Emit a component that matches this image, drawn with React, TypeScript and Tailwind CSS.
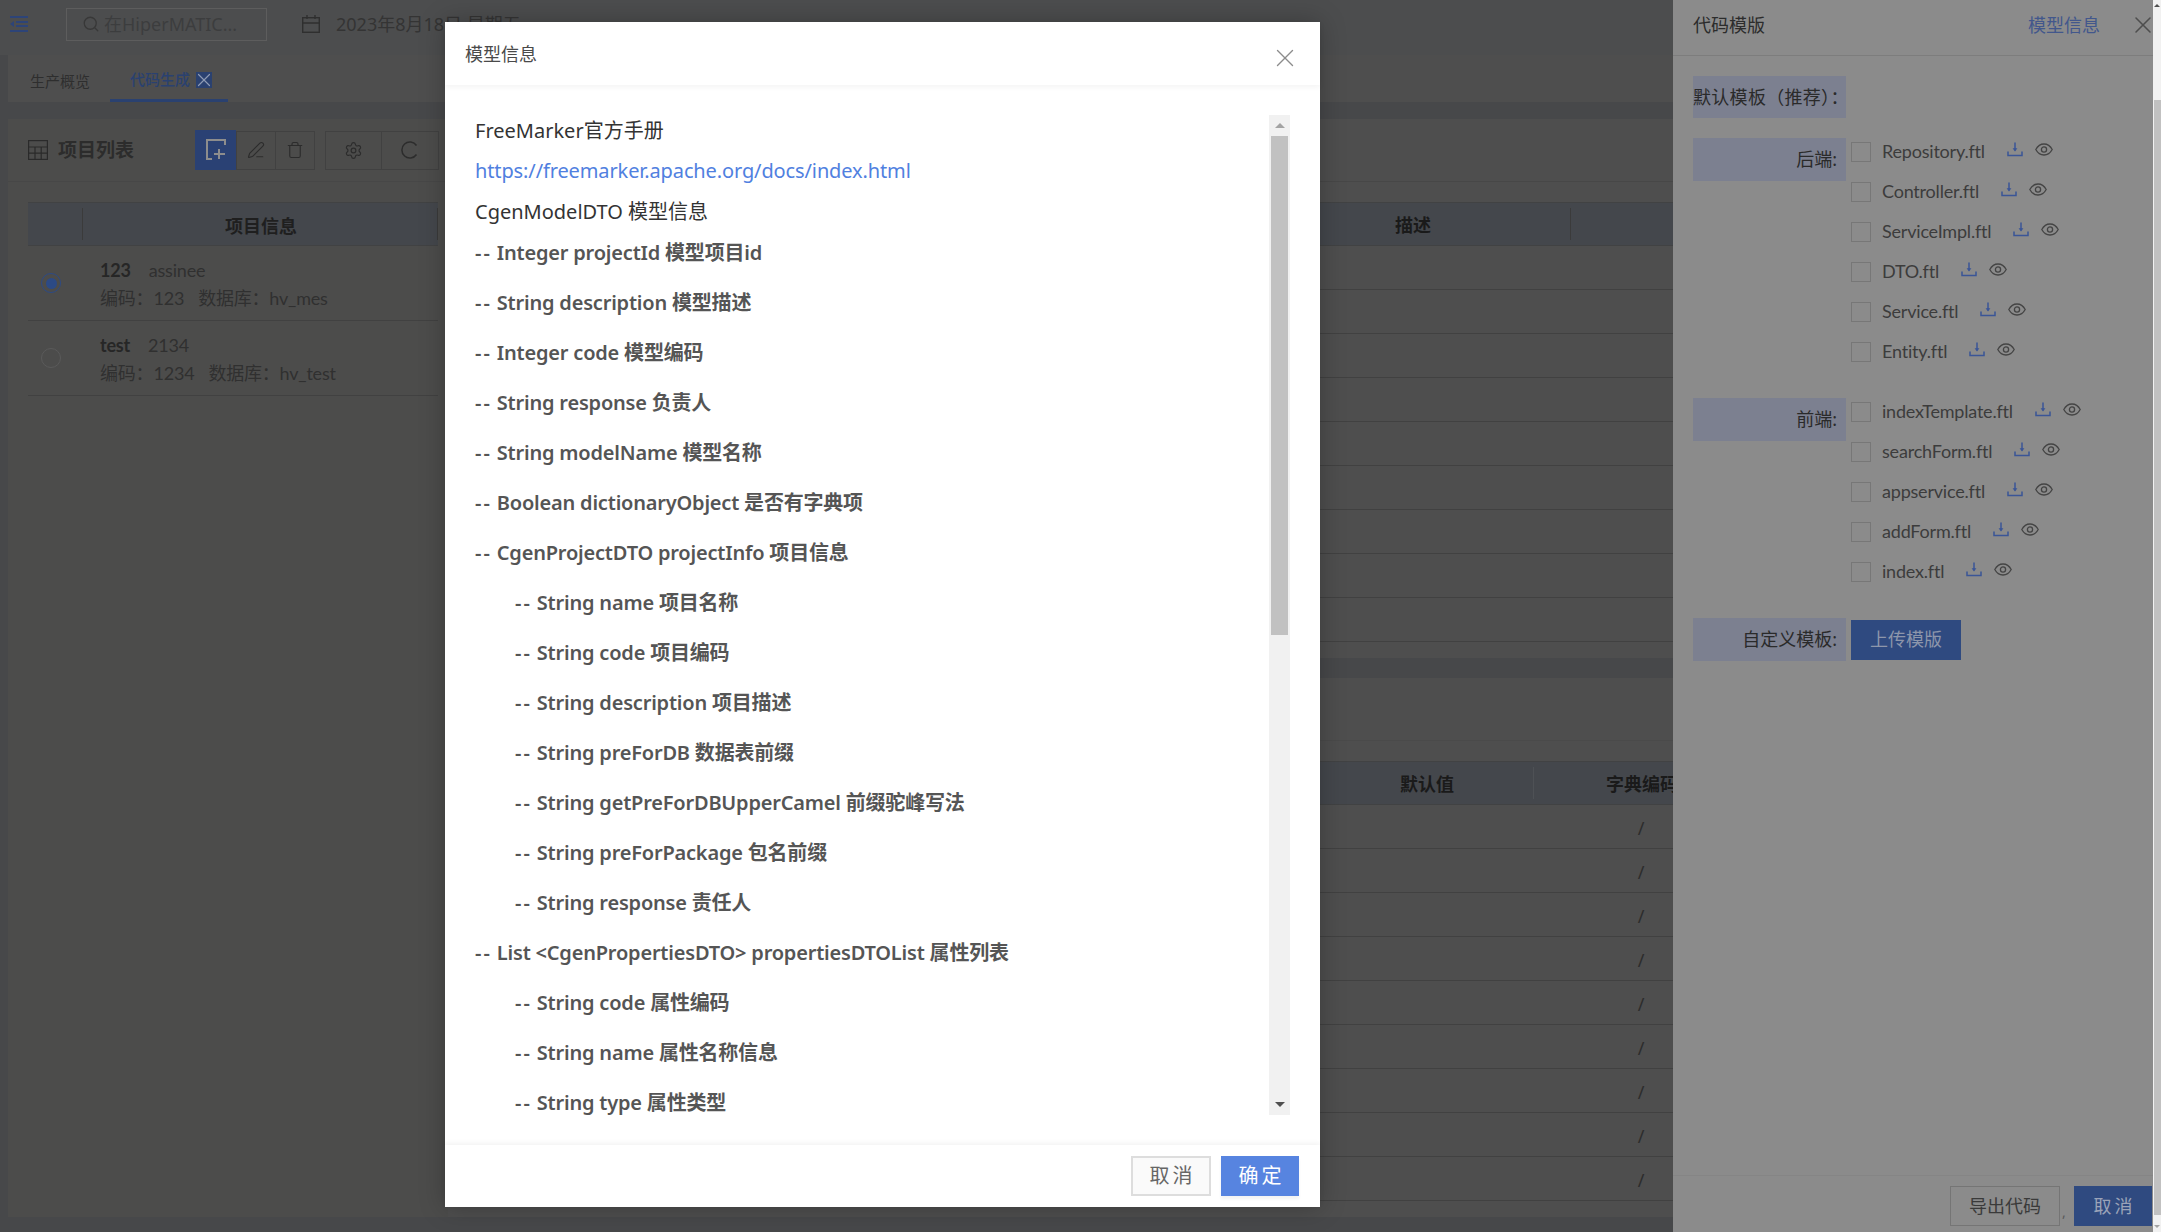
import { Search, PenLine, Trash, Settings, X } from "lucide-react";

const backendFiles = ["Repository.ftl", "Controller.ftl", "ServiceImpl.ftl", "DTO.ftl", "Service.ftl", "Entity.ftl"];
const frontendFiles = ["indexTemplate.ftl", "searchForm.ftl", "appservice.ftl", "addForm.ftl", "index.ftl"];

const modelLines = [
  { text: "Integer projectId 模型项目id", nested: false },
  { text: "String description 模型描述", nested: false },
  { text: "Integer code 模型编码", nested: false },
  { text: "String response 负责人", nested: false },
  { text: "String modelName 模型名称", nested: false },
  { text: "Boolean dictionaryObject 是否有字典项", nested: false },
  { text: "CgenProjectDTO projectInfo 项目信息", nested: false },
  { text: "String name 项目名称", nested: true },
  { text: "String code 项目编码", nested: true },
  { text: "String description 项目描述", nested: true },
  { text: "String preForDB 数据表前缀", nested: true },
  { text: "String getPreForDBUpperCamel 前缀驼峰写法", nested: true },
  { text: "String preForPackage 包名前缀", nested: true },
  { text: "String response 责任人", nested: true },
  { text: "List <CgenPropertiesDTO> propertiesDTOList 属性列表", nested: false },
  { text: "String code 属性编码", nested: true },
  { text: "String name 属性名称信息", nested: true },
  { text: "String type 属性类型", nested: true },
];

function DownloadIcon() {
  return (
    <svg width="16" height="15" viewBox="0 0 16 15" fill="none" stroke="#3a5597" strokeWidth="1.5">
      <path d="M8 0.5V8.5" />
      <path d="M5.6 6.2H10.4L8 9.6Z" fill="#3a5597" stroke="none" />
      <path d="M1 9.5V13.6H15V9.5" />
    </svg>
  );
}

function EyeIcon() {
  return (
    <svg width="18" height="13" viewBox="0 0 18 13" fill="none" stroke="#444444" strokeWidth="1.3">
      <path d="M0.8 6.5C2.8 2.8 5.6 1 9 1C12.4 1 15.2 2.8 17.2 6.5C15.2 10.2 12.4 12 9 12C5.6 12 2.8 10.2 0.8 6.5Z" />
      <circle cx="9" cy="6.5" r="2.6" />
    </svg>
  );
}

function FileRow({ name }: { name: string }) {
  return (
    <div className="flex h-[40px] items-center">
      <span className="h-[20px] w-[20px] border border-[#777777]" />
      <span className="mb-[2px] ml-[11px] font-['Lato','Noto_Sans_CJK_SC',sans-serif] text-[18px] tracking-[-0.2px] text-[#3c3c3c]">{name}</span>
      <span className="mb-[6px] ml-[22px] flex items-center gap-[12px]">
        <DownloadIcon />
        <EyeIcon />
      </span>
    </div>
  );
}

function Drawer() {
  return (
    <div className="absolute top-0 left-[1673px] flex h-[1232px] w-[480px] flex-col bg-[#8b8b8b]">
      <div className="flex h-[56px] shrink-0 items-center border-b border-[#7d7d7d] pb-[5px] pl-[20px] whitespace-nowrap">
        <span className="text-[18px] text-[#2c2c2c]">代码模版</span>
        <span className="ml-[263px] text-[18px] text-[#42578c]">模型信息</span>
        <X className="ml-[29px] h-[28px] w-[28px] shrink-0 text-[#4e4e4e]" strokeWidth={1.3} />
      </div>
      <div className="flex-1 pt-[20px] pl-[20px]">
        <div className="flex h-[42px] w-[153px] items-center bg-[#7c8090] text-[18px] tracking-[0.3px] whitespace-nowrap text-[#2a2a2a]">
          默认模板（推荐）：
        </div>
        <div className="mt-[14px] flex">
          <div className="mt-[6px] flex h-[43px] w-[153px] items-center justify-end bg-[#7c8090] pr-[9px] text-[18px] text-[#2a2a2a]">
            后端:
          </div>
          <div className="ml-[5px]">
            {backendFiles.map((f) => (
              <FileRow key={f} name={f} />
            ))}
          </div>
        </div>
        <div className="mt-[20px] flex">
          <div className="mt-[6px] flex h-[43px] w-[153px] items-center justify-end bg-[#7c8090] pr-[9px] text-[18px] text-[#2a2a2a]">
            前端:
          </div>
          <div className="ml-[5px]">
            {frontendFiles.map((f) => (
              <FileRow key={f} name={f} />
            ))}
          </div>
        </div>
        <div className="mt-[26px] flex items-center">
          <div className="flex h-[43px] w-[153px] items-center justify-end bg-[#7c8090] pr-[9px] text-[18px] text-[#2a2a2a]">
            自定义模板:
          </div>
          <button className="ml-[5px] h-[40px] w-[110px] bg-[#2f4a80] text-[18px] text-[#8d96ab]">上传模版</button>
        </div>
      </div>
      <div className="flex h-[57px] shrink-0 items-start justify-end border-t border-[#858585] pt-[10px]">
        <button className="h-[40px] w-[110px] border border-[#757575] text-[18px] text-[#3a3a3a]">导出代码</button>
        <span className="mx-[2px] mt-[15px] w-[10px] text-[14px] text-[#5a5a5a]">,</span>
        <button className="mr-[1px] h-[40px] w-[78px] bg-[#2f4a80] pl-[3px] text-[18px] tracking-[3px] text-[#9aa3b8]">取消</button>
      </div>
    </div>
  );
}

function ModelDialog() {
  return (
    <div className="absolute top-[22px] left-[445px] flex h-[1185px] w-[875px] flex-col bg-white shadow-[0_0_24px_rgba(0,0,0,0.25)]">
      <div className="flex h-[63px] shrink-0 items-center justify-between pr-[20px] pl-[20px] shadow-[0_2px_6px_rgba(0,0,0,0.05)]">
        <span className="pt-[2px] text-[18px] text-[#4a4a4a]">模型信息</span>
        <X className="mt-[8px] h-[30px] w-[30px] text-[#8c8c8c]" strokeWidth={1.1} />
      </div>
      <div className="relative flex-1 overflow-hidden pt-[26px] pl-[30px]">
        <p className="h-[39px] text-[20px] leading-[40px] text-[#333333]">FreeMarker官方手册</p>
        <p className="h-[41px] text-[20px] leading-[41px] tracking-[-0.12px] text-[#5080e0]">
          https://freemarker.apache.org/docs/index.html
        </p>
        <p className="h-[37px] text-[20px] leading-[41px] text-[#333333]">CgenModelDTO 模型信息</p>
        {modelLines.map((line, i) => (
          <p
            key={i}
            className={
              line.nested
                ? "h-[50px] pl-[40px] text-[20px] leading-[50px] font-semibold tracking-[-0.2px] text-[#555555]"
                : "h-[50px] text-[20px] leading-[50px] font-semibold tracking-[-0.2px] text-[#555555]"
            }
          >
            <span className="tracking-[2px]">--</span> {line.text}
          </p>
        ))}
        {/* scrollbar */}
        <div className="absolute top-[30px] right-[30px] flex h-[1000px] w-[21px] flex-col items-center bg-[#f1f1f1]">
          <span className="mt-[8px] h-0 w-0 border-x-[5px] border-b-[5px] border-x-transparent border-b-[#a3a3a3]" />
          <span className="mt-[8px] h-[499px] w-[17px] bg-[#c1c1c1]" />
          <span className="mt-auto mb-[8px] h-0 w-0 border-x-[5px] border-t-[5px] border-x-transparent border-t-[#505050]" />
        </div>
      </div>
      <div className="flex h-[62px] shrink-0 items-start justify-end gap-[10px] pt-[11px] pr-[21px] shadow-[0_-2px_5px_rgba(0,0,0,0.05)]">
        <button className="h-[40px] w-[80px] border-2 border-[#dddddd] bg-[#fafafa] pl-[3px] text-[20px] tracking-[3px] text-[#666666]">
          取消
        </button>
        <button className="h-[40px] w-[78px] bg-[#5784e0] pl-[3px] text-[20px] tracking-[3px] text-white shadow-[0_3px_3px_rgba(0,0,0,0.05)]">
          确定
        </button>
      </div>
    </div>
  );
}

function ProjectRow({ code, owner, no, db, checked }: { code: string; owner: string; no: string; db: string; checked: boolean }) {
  return (
    <div className="flex h-[75px] items-center border-b border-[#414141]">
      <div className="flex w-[72px] shrink-0 justify-start pl-[13px]">
        {checked ? (
          <span className="flex h-[20px] w-[20px] items-center justify-center rounded-full border border-[#2c4a85]">
            <span className="h-[11px] w-[11px] rounded-full bg-[#2c4a85]" />
          </span>
        ) : (
          <span className="h-[20px] w-[20px] rounded-full border border-[#5a5a5a]" />
        )}
      </div>
      <div className="pt-[2px] font-['Lato','Noto_Sans_CJK_SC',sans-serif] text-[18px] leading-[28px] tracking-[-0.2px] text-[#303030]">
        <div className="flex gap-[18px]">
          <span className="font-bold text-[#262626]">{code}</span>
          <span>{owner}</span>
        </div>
        <div className="flex gap-[14px]">
          <span>编码：{no}</span>
          <span>数据库：{db}</span>
        </div>
      </div>
    </div>
  );
}

function LeftPanel() {
  return (
    <div className="ml-[8px] w-[440px] shrink-0 bg-[#4c4c4b]">
      <div className="flex h-[63px] items-center border-b border-[#474747] pl-[20px]">
        <svg width="20" height="20" viewBox="0 0 20 20" fill="none" stroke="#2a2a2a" strokeWidth="1.2">
          <rect x="0.6" y="0.6" width="18.8" height="18.8" />
          <path d="M0.6 7H19.4M0.6 13.2H19.4M7 7V19.4M13.2 7V19.4" />
        </svg>
        <span className="ml-[10px] text-[19px] font-bold text-[#2c2c2c]">项目列表</span>
        <div className="ml-[61px] flex items-center">
          <span className="flex h-[40px] w-[41px] items-center justify-center bg-[#2a4174]">
            <svg width="22" height="22" viewBox="0 0 22 22" fill="none" stroke="#8d8d8d" strokeWidth="2">
              <path d="M20 6V1H2V20H7" />
              <path d="M14 10V20M9 15H20" />
            </svg>
          </span>
          <span className="flex h-[39px] w-[40px] items-center justify-center border border-[#414141]">
            <PenLine className="h-[18px] w-[18px] text-[#2c2c2c]" strokeWidth={1.5} />
          </span>
          <span className="flex h-[39px] w-[39px] items-center justify-center border-y border-r border-[#414141]">
            <Trash className="h-[18px] w-[18px] text-[#2c2c2c]" strokeWidth={1.5} />
          </span>
          <span className="ml-[10px] flex h-[39px] w-[57px] items-center justify-center border border-[#414141]">
            <Settings className="h-[19px] w-[19px] text-[#2c2c2c]" strokeWidth={1.5} />
          </span>
          <span className="flex h-[39px] w-[57px] items-center justify-center border-y border-r border-[#414141]">
            <svg width="18" height="18" viewBox="0 0 18 18" fill="none" stroke="#2c2c2c" strokeWidth="1.5">
              <path d="M15.5 4.5A8 8 0 1 0 15.5 13.5" />
            </svg>
          </span>
        </div>
      </div>
      <div className="mt-[20px] ml-[20px] w-[410px]">
        <div className="flex h-[44px] items-center border-y border-[#414243] bg-[#44474c]">
          <span className="h-[32px] w-[55px] border-r border-[#3b3b3b]" />
          <span className="h-[32px] flex-1 border-r border-[#3b3b3b] pt-[2px] pl-[2px] text-center text-[18px] leading-[32px] font-bold text-[#1f1f1f]">
            项目信息
          </span>
        </div>
        <ProjectRow code="123" owner="assinee" no="123" db="hv_mes" checked />
        <ProjectRow code="test" owner="2134" no="1234" db="hv_test" checked={false} />
      </div>
    </div>
  );
}

function DetailPanel({ children }: { children: React.ReactNode }) {
  return <div className="flex flex-col bg-[#4e4e4e] pl-[12px]">{children}</div>;
}

function App() {
  return (
    <div className="relative h-[1232px] w-[2161px] overflow-hidden bg-[#47484a] font-['Noto_Sans','Noto_Sans_CJK_SC',sans-serif]">
      {/* top bar */}
      <div className="flex h-[55px] items-center bg-[#4c4d4e] pb-[7px]">
        <svg className="ml-[10px]" width="18" height="16" viewBox="0 0 18 16" fill="#2d4478">
          <rect x="0" y="0" width="18" height="2" />
          <rect x="6" y="5" width="12" height="2" />
          <rect x="6" y="9" width="12" height="2" />
          <rect x="0" y="14" width="18" height="2" />
          <path d="M0 8L4 5V11Z" />
        </svg>
        <div className="ml-[38px] flex h-[33px] w-[201px] items-center border border-[#5d5d5d] pl-[15px]">
          <Search className="h-[18px] w-[18px] text-[#383838]" strokeWidth={1.7} />
          <span className="ml-[4px] text-[18px] text-[#3c3d3e]">在HiperMATIC...</span>
        </div>
        <svg className="ml-[35px]" width="18" height="18" viewBox="0 0 18 18" fill="none" stroke="#2f2f2f" strokeWidth="1.4">
          <rect x="0.7" y="2.7" width="16.6" height="14.6" />
          <path d="M0.7 8H17.3M5 0V4M13 0V4" />
        </svg>
        <span className="ml-[16px] text-[18px] text-[#343434]">2023年8月18日 星期五</span>
      </div>

      {/* tabs */}
      <div className="ml-[8px] flex h-[47px] bg-[#4e4e4e] text-[15px]">
        <span className="ml-[22px] flex items-center pt-[5px] text-[#2e2e2e]">生产概览</span>
        <span className="ml-[20px] flex w-[118px] items-center border-b-[3px] border-[#2a4170] pt-[5px] pl-[20px] font-medium text-[#2a4170]">
          代码生成
          <span className="ml-[6px] flex h-[16px] w-[16px] items-center justify-center overflow-hidden bg-[#2a4170]">
            <X className="h-[22px] w-[22px] shrink-0 text-[#8e9ab4]" strokeWidth={1.3} />
          </span>
        </span>
      </div>

      {/* main */}
      <div className="mt-[17px] flex h-[1098px]">
        <LeftPanel />
        <div className="flex flex-1 flex-col overflow-hidden">
          <DetailPanel>
            <div className="h-[539px]">
              <div className="-ml-[12px] h-[63px] border-b border-[#474747]" />
              <div className="mt-[20px] flex h-[44px] items-center border-y border-[#414243] bg-[#44474c]">
                <span className="ml-[796px] w-[314px] pt-[2px] text-center text-[18px] font-semibold text-[#1a1a1a]">描述</span>
                <span className="h-[32px] border-r border-[#3b3b3b]" />
              </div>
              {[0, 1, 2, 3, 4, 5, 6, 7, 8].map((i) => (
                <div key={i} className="h-[44px] border-b border-[#414141]" />
              ))}
            </div>
          </DetailPanel>
          <div className="mt-[20px] flex-1">
            <DetailPanel>
              <div className="h-[539px]">
                <div className="-ml-[12px] h-[63px] border-b border-[#4a4a4a]" />
                <div className="mt-[20px] flex h-[44px] items-center border-y border-[#414243] bg-[#44474c]">
                  <span className="ml-[861px] w-[212px] pt-[2px] text-center text-[18px] font-semibold text-[#1a1a1a]">默认值</span>
                  <span className="h-[32px] border-r border-[#4e5155]" />
                  <span className="w-[216px] pt-[2px] text-center text-[18px] font-semibold text-[#1a1a1a]">字典编码</span>
                </div>
                {[0, 1, 2, 3, 4, 5, 6, 7, 8].map((i) => (
                  <div key={i} className="flex h-[44px] items-center border-b border-[#414141]">
                    <span className="ml-[1073px] w-[216px] pt-[4px] text-center text-[18px] text-[#2c2c2c]">/</span>
                  </div>
                ))}
              </div>
            </DetailPanel>
          </div>
        </div>
      </div>

      <Drawer />
      <ModelDialog />

      {/* page scrollbar */}
      <div className="absolute top-0 right-0 flex h-[1232px] w-[8px] flex-col items-center bg-[#f1f1f1]">
        <span className="mt-[4px] h-0 w-0 border-x-[3px] border-b-[3px] border-x-transparent border-b-[#505050]" />
        <span className="mt-[93px] h-[1115px] w-[7px] self-end bg-[#c1c1c1]" />
        <span className="mt-auto mb-[4px] h-0 w-0 border-x-[3px] border-t-[3px] border-x-transparent border-t-[#a3a3a3]" />
      </div>
    </div>
  );
}

export default App;
